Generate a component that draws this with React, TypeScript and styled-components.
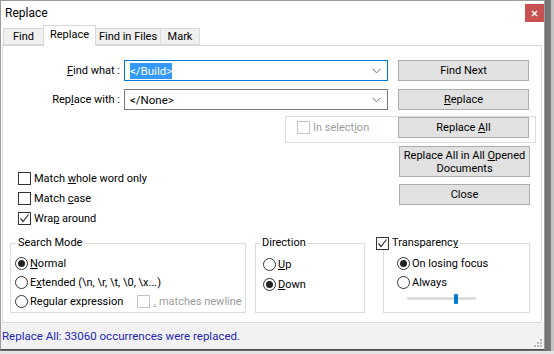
import styled, { createGlobalStyle } from "styled-components";

const GlobalStyle = createGlobalStyle`
  html, body {
    margin: 0;
    padding: 0;
    background: #e4e4e4;
  }
  body {
    font-family: Roboto, "Noto Sans", sans-serif;
    font-size: 11px;
    color: #000;
  }
  #root {
    width: 554px;
    height: 354px;
    overflow: hidden;
  }
`;

const CheckMark = () => (
  <svg width="11" height="11" viewBox="0 0 11 11">
    <polyline points="1.5,5.5 4,8.5 9.5,1.5" fill="none" stroke="#333" strokeWidth="1.2" />
  </svg>
);

const Chevron = () => (
  <svg width="9" height="6" viewBox="0 0 9 6">
    <polyline points="0.5,0.8 4.5,4.8 8.5,0.8" fill="none" stroke="#6a6a6a" strokeWidth="1" />
  </svg>
);

const Grip = () => (
  <svg width="8" height="9" viewBox="0 0 8 9">
    <g fill="#b9b9b9">
      <rect x="6" y="1" width="2" height="2" />
      <rect x="3" y="4" width="2" height="2" />
      <rect x="6" y="4" width="2" height="2" />
      <rect x="0" y="7" width="2" height="2" />
      <rect x="3" y="7" width="2" height="2" />
      <rect x="6" y="7" width="2" height="2" />
    </g>
  </svg>
);

const Box = ({ checked, disabled }: { checked?: boolean; disabled?: boolean }) => (
  <CheckBox $disabled={disabled}>{checked && <CheckMark />}</CheckBox>
);

export default function App() {
  return (
    <Page>
      <GlobalStyle />
      <Window>
        <TitleBar>
          <Title>Replace</Title>
          <CloseBtn>
            <svg width="7" height="7" viewBox="0 0 7 7">
              <path d="M1 1 L6 6 M6 1 L1 6" stroke="#fff" strokeWidth="1.4" />
            </svg>
          </CloseBtn>
        </TitleBar>

        <TabRow>
          <Tab $w={41}>Find</Tab>
          <Tab $w={53} $active>
            Replace
          </Tab>
          <Tab $w={66}>Find in Files</Tab>
          <Tab $w={40}>Mark</Tab>
        </TabRow>

        <Panel>
          <FieldRow $mt={14}>
            <FieldLabel>
              <Acc>F</Acc>ind what :
            </FieldLabel>
            <Combo $focus>
              <ComboText>
                <Selected>&lt;/Build&gt;</Selected>
              </ComboText>
              <Chevron />
            </Combo>
            <Button $h={21}>Find Next</Button>
          </FieldRow>

          <FieldRow $mt={8}>
            <FieldLabel>
              Rep<Acc>l</Acc>ace with :
            </FieldLabel>
            <Combo>
              <ComboText>&lt;/None&gt;</ComboText>
              <Chevron />
            </Combo>
            <Button $h={21}>
              <Acc>R</Acc>eplace
            </Button>
          </FieldRow>

          <SelectionFrame>
            <CheckRow $disabled>
              <Box disabled />
              <Caption>
                In select<Acc>i</Acc>on
              </Caption>
            </CheckRow>
            <Button $h={21}>
              Replace <Acc>A</Acc>ll
            </Button>
          </SelectionFrame>

          <Middle>
            <Options>
              <CheckRow>
                <Box />
                <Caption>
                  Match <Acc>w</Acc>hole word only
                </Caption>
              </CheckRow>
              <CheckRow>
                <Box />
                <Caption>
                  Match <Acc>c</Acc>ase
                </Caption>
              </CheckRow>
              <CheckRow>
                <Box checked />
                <Caption>
                  Wra<Acc>p</Acc> around
                </Caption>
              </CheckRow>
            </Options>
            <Actions>
              <Button $h={31}>
                Replace All in All <Acc>O</Acc>pened
                <br />
                Documents
              </Button>
              <Button $h={21}>Close</Button>
            </Actions>
          </Middle>

          <Groups>
            <Group $w={236} $mr={9}>
              <Legend $ml={5}>Search Mode</Legend>
              <GroupBody $pl={4} $pt={4}>
                <RadioRow $h={19}>
                  <Radio $on />
                  <Caption>
                    <Acc>N</Acc>ormal
                  </Caption>
                </RadioRow>
                <RadioRow $h={19}>
                  <Radio />
                  <Caption>
                    E<Acc>x</Acc>tended (\n, \r, \t, \0, \x...)
                  </Caption>
                </RadioRow>
                <RadioRow $h={19}>
                  <Radio />
                  <Caption>
                    Re<Acc>g</Acc>ular expression
                  </Caption>
                  <NewlineOpt $disabled>
                    <Box disabled />
                    <Caption>
                      <Acc>.</Acc> matches newline
                    </Caption>
                  </NewlineOpt>
                </RadioRow>
              </GroupBody>
            </Group>

            <Group $w={110} $mr={18}>
              <Legend $ml={4}>Direction</Legend>
              <GroupBody $pl={7} $pt={4}>
                <RadioRow $h={20}>
                  <Radio />
                  <Caption>
                    <Acc>U</Acc>p
                  </Caption>
                </RadioRow>
                <RadioRow $h={20}>
                  <Radio $on />
                  <Caption>
                    <Acc>D</Acc>own
                  </Caption>
                </RadioRow>
              </GroupBody>
            </Group>

            <Group $w={147} $mr={0}>
              <Legend $ml={-8} $plain>
                <CheckRow>
                  <Box checked />
                  <Caption>
                    Transparenc<Acc>y</Acc>
                  </Caption>
                </CheckRow>
              </Legend>
              <GroupBody $pl={13} $pt={4}>
                <RadioRow $h={19}>
                  <Radio $on />
                  <Caption>On losing focus</Caption>
                </RadioRow>
                <RadioRow $h={19}>
                  <Radio />
                  <Caption>Always</Caption>
                </RadioRow>
                <Slider>
                  <Thumb style={{ left: 46 }} />
                </Slider>
              </GroupBody>
            </Group>
          </Groups>
        </Panel>

        <StatusBar>
          <StatusText>Replace All: 33060 occurrences were replaced.</StatusText>
          <GripHold>
            <Grip />
          </GripHold>
        </StatusBar>
      </Window>
      <Edge />
    </Page>
  );
}

const Page = styled.div`
  width: 554px;
  height: 354px;
  display: flex;
  align-items: flex-start;
`;

const Window = styled.div`
  width: 545px;
  height: 350px;
  box-sizing: border-box;
  border: 1px solid #9c9c9c;
  border-bottom-color: #4c4c4c;
  box-shadow: 0 1px 0 #6a6a6a;
  background: #fff;
  display: flex;
  flex-direction: column;
`;

const Edge = styled.div`
  width: 9px;
  height: 351px;
  background: linear-gradient(to right, #707070 0, #7a7a7a 6px, #c4c4c4 6px);
`;

const TitleBar = styled.div`
  height: 24px;
  display: flex;
  justify-content: space-between;
  align-items: flex-start;
`;

const Title = styled.div`
  padding: 4px 0 0 4px;
  font-size: 12px;
  line-height: 16px;
`;

const CloseBtn = styled.div`
  width: 19px;
  height: 18px;
  margin-top: 3px;
  background: #c75050;
  display: flex;
  align-items: center;
  justify-content: center;
`;

const TabRow = styled.div`
  height: 20px;
  display: flex;
  align-items: flex-end;
  padding-left: 2px;
  position: relative;
  z-index: 1;
`;

const Tab = styled.div<{ $w: number; $active?: boolean }>`
  width: ${({ $w }) => $w}px;
  height: ${({ $active }) => ($active ? 21 : 17)}px;
  margin-bottom: ${({ $active }) => ($active ? -1 : 0)}px;
  margin-right: -1px;
  padding-bottom: ${({ $active }) => ($active ? 3 : 0)}px;
  box-sizing: border-box;
  background: ${({ $active }) => ($active ? "#fff" : "#f0f0f0")};
  border: 1px solid #d9d9d9;
  border-bottom: ${({ $active }) => ($active ? "none" : "1px solid #d9d9d9")};
  display: flex;
  align-items: center;
  justify-content: center;
  white-space: nowrap;
`;

const Panel = styled.div`
  flex: 1;
  margin: 0 2px 0 1px;
  border: 1px solid #d9d9d9;
  background: #fff;
  display: flex;
  flex-direction: column;
`;

const Acc = styled.u`
  text-decoration: underline;
  text-underline-offset: 1px;
`;

const Caption = styled.span`
  white-space: nowrap;
`;

const FieldRow = styled.div<{ $mt: number }>`
  display: flex;
  align-items: center;
  height: 21px;
  margin-top: ${({ $mt }) => $mt}px;
`;

const FieldLabel = styled.label`
  width: 117px;
  margin-right: 4px;
  text-align: right;
  white-space: nowrap;
`;

const Combo = styled.div<{ $focus?: boolean }>`
  width: 264px;
  height: 21px;
  box-sizing: border-box;
  border: 1px solid ${({ $focus }) => ($focus ? "#0078d7" : "#7a7a7a")};
  display: flex;
  align-items: center;
  padding: 0 6px 0 5px;
`;

const ComboText = styled.div`
  flex: 1;
  font-size: 11.5px;
`;

const Selected = styled.span`
  background: #3399ff;
  color: #fff;
  padding: 1px 0;
`;

const Button = styled.button<{ $h: number }>`
  width: 131px;
  height: ${({ $h }) => $h}px;
  margin: 0 0 0 10px;
  padding: 0;
  box-sizing: border-box;
  border: 1px solid #adadad;
  background: #e1e1e1;
  font: inherit;
  line-height: 13px;
  color: #000;
  text-align: center;
`;

const SelectionFrame = styled.div`
  width: 251px;
  height: 27px;
  margin: 6px 0 0 282px;
  box-sizing: border-box;
  border: 1px solid #dcdcdc;
  display: flex;
  align-items: flex-start;
  justify-content: space-between;
  padding: 0 6px 0 11px;

  & > div {
    margin-top: 1px;
  }
`;

const CheckRow = styled.div<{ $disabled?: boolean }>`
  height: 19px;
  display: flex;
  align-items: center;
  gap: 3px;
  white-space: nowrap;
  color: ${({ $disabled }) => ($disabled ? "#9c9c9c" : "#000")};
`;

const CheckBox = styled.span<{ $disabled?: boolean }>`
  width: 13px;
  height: 13px;
  box-sizing: border-box;
  border: 1px solid ${({ $disabled }) => ($disabled ? "#c4c4c4" : "#333")};
  background: #fff;
  display: inline-flex;
  align-items: center;
  justify-content: center;
  flex-shrink: 0;
`;

const Middle = styled.div`
  display: flex;
  justify-content: space-between;
`;

const Options = styled.div`
  display: flex;
  flex-direction: column;
  gap: 1px;
  padding: 26px 0 0 15px;
`;

const Actions = styled.div`
  display: flex;
  flex-direction: column;
  gap: 7px;
  padding: 3px 11px 0 0;
`;

const Groups = styled.div`
  display: flex;
  margin: 8px 0 0 7px;
`;

const Group = styled.fieldset<{ $w: number; $mr: number }>`
  width: ${({ $w }) => $w}px;
  height: 77px;
  margin: 0 ${({ $mr }) => $mr}px 0 0;
  padding: 0;
  box-sizing: border-box;
  border: 1px solid #dcdcdc;
  min-width: 0;
`;

const Legend = styled.legend<{ $ml: number; $plain?: boolean }>`
  margin-left: ${({ $ml }) => $ml}px;
  padding: ${({ $plain }) => ($plain ? "0 2px 0 0" : "0 2px")};
  line-height: 14px;
  height: 14px;
  display: flex;
  align-items: center;
`;

const GroupBody = styled.div<{ $pl: number; $pt: number }>`
  display: flex;
  flex-direction: column;
  padding: ${({ $pt }) => $pt}px 0 0 ${({ $pl }) => $pl}px;
`;

const RadioRow = styled.div<{ $h: number }>`
  height: ${({ $h }) => $h}px;
  display: flex;
  align-items: center;
  gap: 2px;
  white-space: nowrap;
`;

const Radio = styled.span<{ $on?: boolean }>`
  width: 13px;
  height: 13px;
  box-sizing: border-box;
  border-radius: 50%;
  border: 1px solid #333;
  background: #fff;
  display: inline-flex;
  align-items: center;
  justify-content: center;
  flex-shrink: 0;

  &::after {
    content: "";
    width: 7px;
    height: 7px;
    border-radius: 50%;
    background: #222;
    display: ${({ $on }) => ($on ? "block" : "none")};
  }
`;

const NewlineOpt = styled(CheckRow)`
  margin-left: 12px;
`;

const Slider = styled.div`
  position: relative;
  width: 69px;
  height: 3px;
  margin: 5px 0 0 10px;
  background: #d6d6d6;
  border: 1px solid #e4e4e4;
  box-sizing: border-box;
`;

const Thumb = styled.div`
  position: absolute;
  top: -4px;
  width: 4px;
  height: 10px;
  border-radius: 1px;
  background: #0078d7;
`;

const StatusBar = styled.div`
  height: 26px;
  background: #f2f2f2;
  display: flex;
  align-items: center;
  justify-content: space-between;
  padding-left: 1px;
`;

const StatusText = styled.div`
  color: #2424b8;
  font-size: 11.5px;
`;

const GripHold = styled.div`
  align-self: flex-end;
  padding: 0 2px 2px 0;
  line-height: 0;
`;
